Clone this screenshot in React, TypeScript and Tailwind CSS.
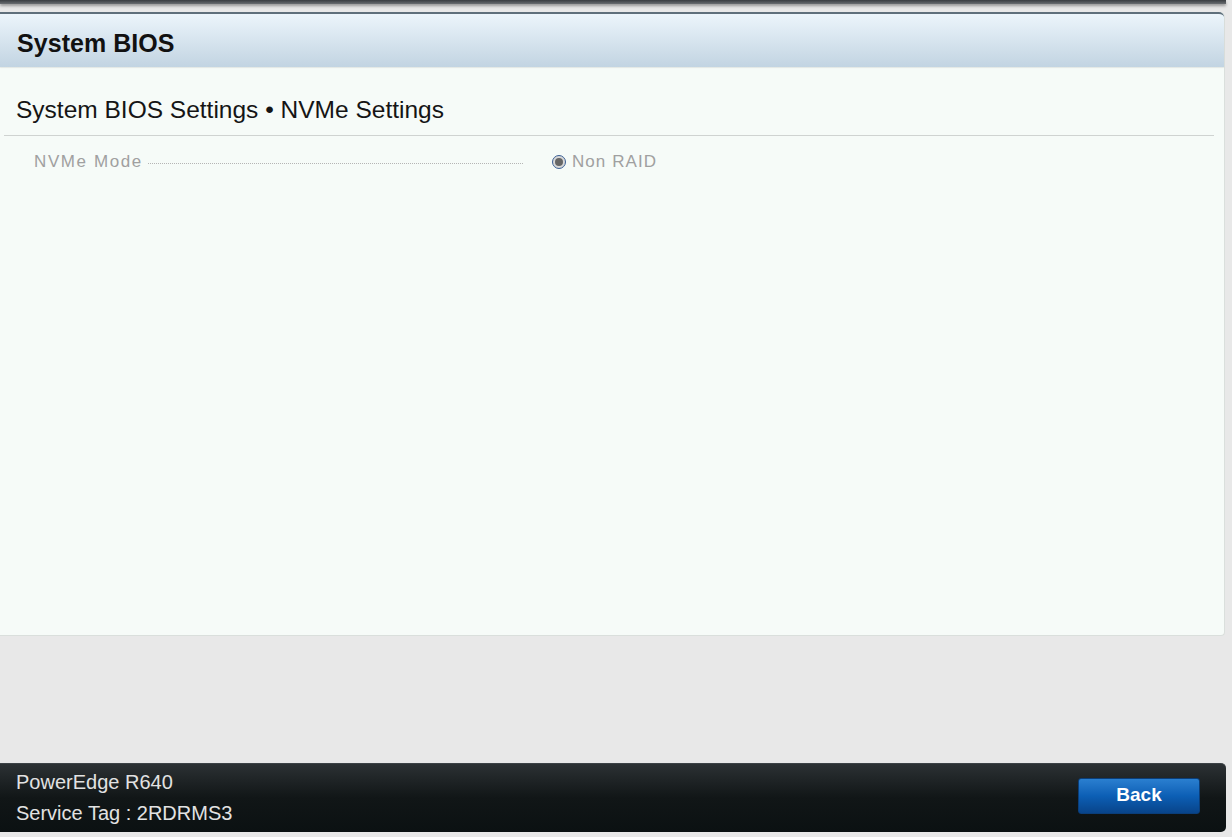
export default function App() {
    return (
        <div className="w-[1232px] h-[837px] bg-[#e8e8e8] flex flex-col overflow-hidden" style={{ fontFamily: '"Liberation Sans", Arial, sans-serif' }}>
            {/* top edge of previous frame */}
            <div className="h-[4px] mr-[6px] bg-gradient-to-b from-[#3a3e42] to-[#6a6e72] shadow-[0_2px_3px_rgba(0,0,0,0.35)] shrink-0" />

            {/* main panel */}
            <div className="mt-[8px] h-[624px] mr-[7px] shrink-0 flex flex-col rounded-tr-[5px] rounded-br-[4px] border-r border-b border-[#dadfdc] bg-[#f6fbf8]">
                <div className="h-[55px] shrink-0 flex items-center px-[17px] pt-[6px] rounded-tr-[5px] border-t-2 border-[#5f6f7b] bg-gradient-to-b from-[#ecf5fb] to-[#c2d4e2] shadow-[0_1px_1px_rgba(0,0,0,0.08)]">
                    <span className="text-[25px] font-bold text-[#111] tracking-[0.05px]">System BIOS</span>
                </div>
                <div className="mt-[28px] ml-[16px] text-[24.5px] leading-[30px] text-[#151515]">
                    System BIOS Settings • NVMe Settings
                </div>
                <div className="mt-[10px] ml-[4px] mr-[10px] h-px bg-[#cfd3d1]" />
                <div className="mt-[15px] flex items-center h-[22px]">
                    <span className="ml-[34px] text-[17px] text-[#a0a0a0] tracking-[1.6px]">NVMe Mode</span>
                    <span className="ml-[5px] w-[375px] border-b border-dotted border-[#b5b5b5] translate-y-[1px]" />
                    <span className="ml-[29px] w-[14px] h-[14px] rounded-full border border-[#3a5f95] bg-[#d8d8d8] flex items-center justify-center">
                        <span className="w-[8px] h-[8px] rounded-full bg-[#666]" />
                    </span>
                    <span className="ml-[6px] text-[17px] text-[#a0a0a0] tracking-[1.1px]">Non RAID</span>
                </div>
            </div>

            <div className="flex-1" />

            {/* footer */}
            <div className="h-[69px] mr-[6px] mb-[5px] shrink-0 flex items-center justify-between rounded-r-[5px] border-t border-[#3c4246] bg-gradient-to-b from-[#2c3134] via-[#111617] to-[#0b1112] pl-[16px] pr-[26px]">
                <div className="flex flex-col text-[20px] leading-[31px] text-[#e2e2e2]">
                    <span>PowerEdge R640</span>
                    <span>Service Tag : 2RDRMS3</span>
                </div>
                <button className="mb-[5px] w-[122px] h-[36px] rounded-[3px] bg-gradient-to-b from-[#2a7fd0] via-[#0c5fb5] to-[#08448a] border border-[#0a3e7a] text-white text-[19px] font-bold">
                    Back
                </button>
            </div>
        </div>
    )
}
